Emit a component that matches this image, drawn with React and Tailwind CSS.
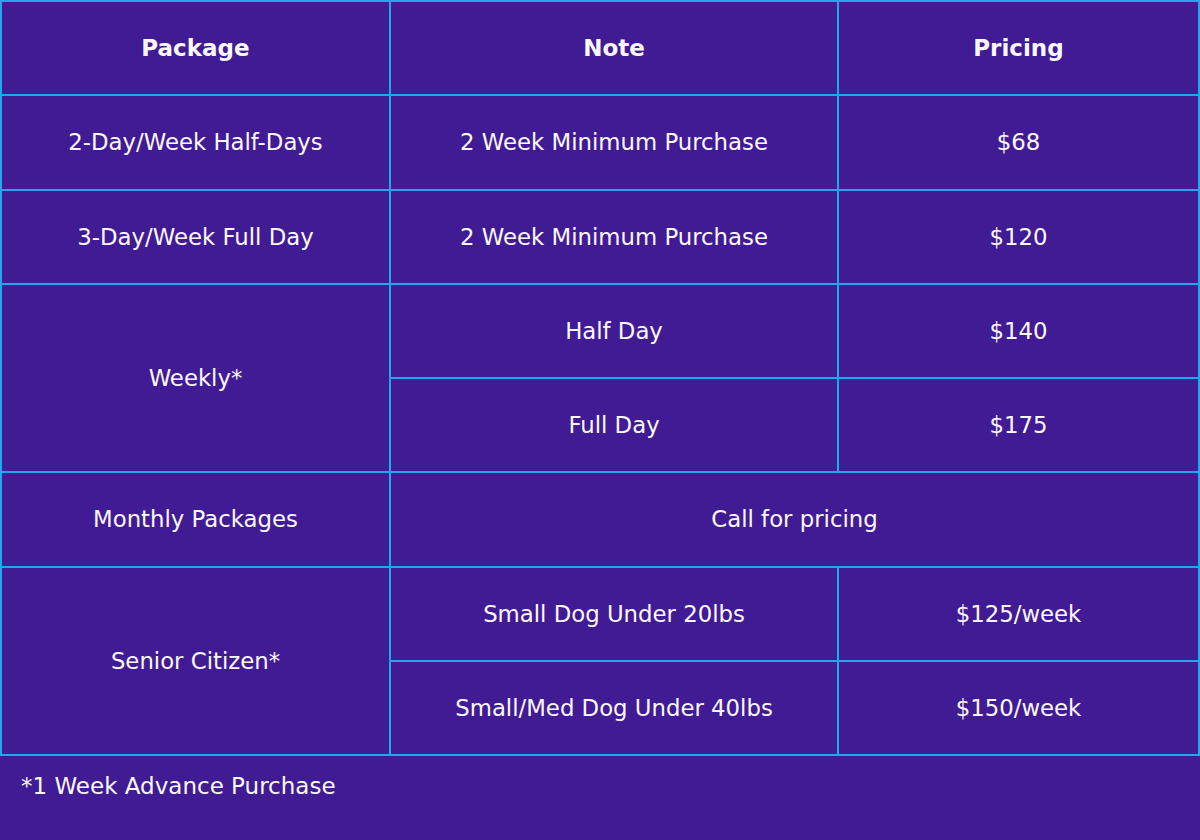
const rows = [
  { pkg: '2-Day/Week Half-Days', note: '2 Week Minimum Purchase', price: '$68' },
  { pkg: '3-Day/Week Full Day', note: '2 Week Minimum Purchase', price: '$120' },
];

const Cell = ({ className = '', children }) => (
  <div className={`bg-[#411b93] flex items-center justify-center text-center ${className}`}>
    {children}
  </div>
);

export default function App() {
  return (
    <div
      className="w-[1200px] h-[840px] bg-[#411b93] text-[#fbf8ff] text-[22.8px]"
      style={{ fontFamily: '"Comic Sans MS", "DejaVu Sans", sans-serif' }}
    >
      <div className="grid grid-cols-[387px_446px_359px] grid-rows-[repeat(8,92.25px)] gap-[2px] p-[2px] bg-[#22a7ee]">
        <Cell className="text-[23px] font-bold">Package</Cell>
        <Cell className="text-[23px] font-bold">Note</Cell>
        <Cell className="text-[23px] font-bold">Pricing</Cell>

        {rows.map((r) => (
          <div key={r.pkg} className="contents">
            <Cell>{r.pkg}</Cell>
            <Cell>{r.note}</Cell>
            <Cell>{r.price}</Cell>
          </div>
        ))}

        <Cell className="row-span-2">Weekly*</Cell>
        <Cell>Half Day</Cell>
        <Cell>$140</Cell>
        <Cell>Full Day</Cell>
        <Cell>$175</Cell>

        <Cell>Monthly Packages</Cell>
        <Cell className="col-span-2">Call for pricing</Cell>

        <Cell className="row-span-2">Senior Citizen*</Cell>
        <Cell>Small Dog Under 20lbs</Cell>
        <Cell>$125/week</Cell>
        <Cell>Small/Med Dog Under 40lbs</Cell>
        <Cell>$150/week</Cell>
      </div>
      <p className="pl-[21px] pt-[13px] text-[23px]">*1 Week Advance Purchase</p>
    </div>
  );
}
